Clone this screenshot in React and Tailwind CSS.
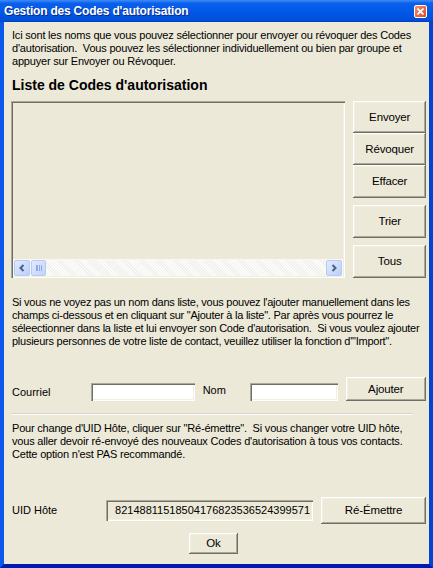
import React from 'react';

// raised 3D button edge, XP classic look
const raised =
    "shadow-[inset_-1px_-1px_#716F64,inset_1px_1px_#FFFFFF,inset_-2px_-2px_#ACA899,inset_2px_2px_#F1EFE2]";

// sunken field edge
const sunken =
    "shadow-[inset_1px_1px_#ACA899,inset_2px_2px_#716F64,inset_-1px_-1px_#FFFFFF,inset_-2px_-2px_#F1EFE2]";

function Button({label, className = ""}) {
    return (
        <button
            className={`flex items-center justify-center bg-[#ECE9D8] text-[11.5px] tracking-[-0.15px] text-black ${raised} ${className}`}>
            {label}
        </button>
    );
}

function ScrollArrow({dir}) {
    return (
        <div
            className="flex h-[16px] w-[16px] items-center justify-center rounded-[2px] border border-[#B7CAF5] bg-[linear-gradient(135deg,#E1EAFE,#BCCFFA)]">
            <svg width="8" height="8" viewBox="0 0 8 8">
                {dir === "left" ? (
                    <path d="M5.5 1 L2.5 4 L5.5 7" fill="none" stroke="#4D6185" strokeWidth="2"/>
                ) : (
                    <path d="M2.5 1 L5.5 4 L2.5 7" fill="none" stroke="#4D6185" strokeWidth="2"/>
                )}
            </svg>
        </div>
    );
}

function App() {
    return (
        <div className="flex h-[568px] w-[433px] flex-col font-['Liberation_Sans',Arial,sans-serif] text-black">

            {/* Title bar */}
            <div
                className="flex h-[22px] items-center justify-between bg-[linear-gradient(to_bottom,#3D8DF8_0%,#0A60EB_15%,#0058E6_55%,#0050DB_90%,#0040C0_100%)] pl-[4px] pr-[6px]">
                <span
                    className="text-[12px] font-bold tracking-[-0.2px] text-white [text-shadow:1px_1px_0_#0A2A8A]">
                    Gestion des Codes d'autorisation
                </span>
                <div
                    className="flex h-[13px] w-[13px] items-center justify-center rounded-[2px] border border-white bg-[linear-gradient(135deg,#F0926E,#DC4A22)]">
                    <svg width="7" height="7" viewBox="0 0 7 7">
                        <path d="M0.5 0.5 L6.5 6.5 M6.5 0.5 L0.5 6.5" stroke="white" strokeWidth="1.6"/>
                    </svg>
                </div>
            </div>

            {/* Dialog body */}
            <div
                className="flex flex-1 flex-col border-b-[4px] border-l-[4px] border-r-[4px] border-b-[#0019B0] border-l-[#0C58EC] border-r-[#0443D2] bg-[#ECE9D8] pl-[8px] pr-[3px] text-[11px] leading-[13px]">

                <div className="pt-[7px] whitespace-nowrap tracking-[-0.2px]">
                    <div>Ici sont les noms que vous pouvez sélectionner pour envoyer ou révoquer des Codes</div>
                    <div>d'autorisation.&nbsp; Vous pouvez les sélectionner individuellement ou bien par groupe et</div>
                    <div>appuyer sur Envoyer ou Révoquer.</div>
                </div>

                <div className="mt-[9px] text-[14px] font-bold leading-[17px]">
                    Liste de Codes d'autorisation
                </div>

                {/* List + buttons */}
                <div className="mt-[7px] flex">
                    <div className={`ml-[-1px] flex h-[177px] w-[336px] flex-col justify-end bg-[#ECE9D8] p-[2px] ${sunken}`}>
                        <div className="flex h-[17px] items-center bg-[#F8F7F3] px-[1px]">
                            <ScrollArrow dir="left"/>
                            <div
                                className="ml-[1px] flex h-[16px] w-[15px] items-center justify-center rounded-[2px] border border-[#B7CAF5] bg-[linear-gradient(135deg,#E1EAFE,#C4D5FB)]">
                                <div className="h-[6px] w-[6px] border-x border-[#8EA8E6] bg-[repeating-linear-gradient(to_right,#8EA8E6_0_1px,transparent_1px_2px)]"/>
                            </div>
                            <div className="h-[16px] flex-1 bg-[repeating-linear-gradient(45deg,#FDFDFB_0_1px,#F1F0EA_1px_2px)]"/>
                            <ScrollArrow dir="right"/>
                        </div>
                    </div>

                    <div className="ml-[8px] flex w-[73px] flex-col">
                        <Button label="Envoyer" className="h-[32px]"/>
                        <Button label="Révoquer" className="h-[32px]"/>
                        <Button label="Effacer" className="h-[33px]"/>
                        <Button label="Trier" className="mt-[7px] h-[33px]"/>
                        <Button label="Tous" className="mt-[7px] h-[33px]"/>
                    </div>
                </div>

                <div className="mt-[18px] whitespace-nowrap tracking-[-0.25px]">
                    <div>Si vous ne voyez pas un nom dans liste, vous pouvez l'ajouter manuellement dans les</div>
                    <div>champs ci-dessous et en cliquant sur "Ajouter à la liste". Par après vous pourrez le</div>
                    <div>séleectionner dans la liste et lui envoyer son Code d'autorisation.&nbsp; Si vous voulez ajouter</div>
                    <div>plusieurs personnes de votre liste de contact, veuillez utiliser la fonction d'"Import".</div>
                </div>

                {/* Add row */}
                <div className="mt-[29px] flex items-end">
                    <div className="mb-[2px] w-[80px]">Courriel</div>
                    <div className={`h-[18px] w-[104px] bg-white ${sunken}`}/>
                    <div className="mb-[4px] ml-[8px] w-[48px]">Nom</div>
                    <div className={`h-[18px] w-[88px] bg-white ${sunken}`}/>
                    <Button label="Ajouter" className="ml-[8px] h-[24px] w-[81px]"/>
                </div>

                {/* Separator */}
                <div className="mt-[12px] h-[2px] w-[401px] border-b border-t border-b-white border-t-[#D8D4C4]"/>

                <div className="mt-[7px] whitespace-nowrap tracking-[-0.2px]">
                    <div>Pour change d'UID Hôte, cliquer sur "Ré-émettre".&nbsp; Si vous changer votre UID hôte,</div>
                    <div>vous aller devoir ré-envoyé des nouveaux Codes d'autorisation à tous vos contacts.</div>
                    <div>Cette option n'est PAS recommandé.</div>
                </div>

                {/* UID row */}
                <div className="mt-[36px] flex items-center">
                    <div className="w-[95px]">UID Hôte</div>
                    <div
                        className={`flex h-[21px] w-[209px] items-center justify-end bg-[#ECE9D8] pr-[3px] ${sunken}`}>
                        82148811518504176823536524399571
                    </div>
                    <Button label="Ré-Émettre" className="ml-[8px] h-[27px] w-[106px]"/>
                </div>

                <div className="mt-[9px] flex justify-center pr-[3px]">
                    <Button label="Ok" className="ml-[-8px] h-[21px] w-[49px]"/>
                </div>
            </div>
        </div>
    );
}

export default App;
